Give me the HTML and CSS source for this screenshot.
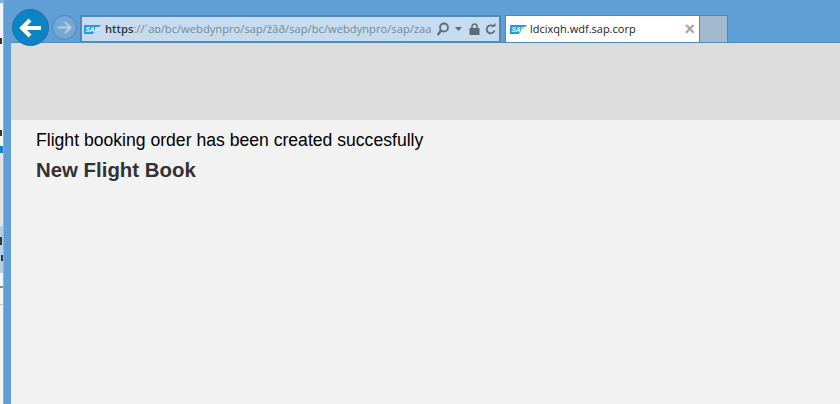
FILE: index.html
```html
<!DOCTYPE html>
<html lang="en">
<head>
<meta charset="utf-8">
<title>New Flight Book</title>
<link rel="stylesheet" href="styles.css">
</head>
<body>
<div class="desk">
  <div class="desk-sky"></div>
  <div class="desk-white"><i class="mark m1"></i><i class="mark m2"></i></div>
  <div class="desk-blue"></div>
  <div class="desk-grey"></div>
  <div class="desk-light"><i class="mark m3"></i><i class="mark m4"></i></div>
  <div class="desk-low"><i class="mark m5"></i><i class="rule"></i></div>
</div>
<div class="window">
  <header class="chrome">
    <button class="nav back" aria-label="Back">
      <svg width="24" height="20" viewBox="0 0 24 20"><path d="M11 2 3 10 11 18M4 10H22" fill="none" stroke="#fff" stroke-width="4"/></svg>
    </button>
    <button class="nav fwd" aria-label="Forward">
      <svg width="15" height="13" viewBox="0 0 15 13"><path d="M8 1 13.500 6.500 8 12M13 6.500H1" fill="none" stroke="#b9cfe0" stroke-width="2"/></svg>
    </button>
    <div class="address">
      <svg class="sap" width="17" height="9" viewBox="0 0 17 9"><path d="M0 0H17L8.500 9H0Z" fill="#2a9ae0"/><text x="1.500" y="7" class="sap-text">SAP</text></svg>
      <span class="url"><b>https</b>://ʾaɒ/bc/webdynpro/sap/žãð/sap/bc/webdynpro/sap/zaa</span>
      <svg class="tool mag" width="12" height="14" viewBox="0 0 12 14"><circle cx="7" cy="5.500" r="4" fill="none" stroke="#5e6a74" stroke-width="1.800"/><path d="M4 8.500 .7 13" stroke="#5e6a74" stroke-width="2.200"/></svg>
      <svg class="tool caret" width="7" height="4" viewBox="0 0 7 4"><path d="M0 0H7L3.500 4Z" fill="#5e6a74"/></svg>
      <svg class="tool lock" width="11" height="12" viewBox="0 0 11 12"><path d="M3 6V3.500a2.500 2.500 0 0 1 5 0V6" fill="none" stroke="#5e6a74" stroke-width="1.500"/><rect x="0.500" y="5" width="10" height="7" fill="#5e6a74"/></svg>
      <svg class="tool reload" width="11" height="12" viewBox="0 0 11 12"><path d="M8.500 3.500A4 4 0 1 0 9.500 7.500" fill="none" stroke="#5e6a74" stroke-width="1.800"/><path d="M6.500 3.500H10.500V0Z" fill="#5e6a74"/></svg>
    </div>
    <div class="tab">
      <svg class="sap" width="17" height="9" viewBox="0 0 17 9"><path d="M0 0H17L8.500 9H0Z" fill="#2a9ae0"/><text x="1.500" y="7" class="sap-text">SAP</text></svg>
      <span class="tab-title">ldcixqh.wdf.sap.corp</span>
      <span class="tab-close">×</span>
    </div>
    <div class="new-tab"></div>
  </header>
  <div class="band"></div>
  <main class="content">
    <p class="message">Flight booking order has been created succesfully</p>
    <h1 class="title">New Flight Book</h1>
  </main>
</div>
</body>
</html>
```
FILE: styles.css
```css
* { box-sizing: border-box; }
html, body { height: 100%; }
body {
  margin: 0;
  display: flex;
  height: 404px;
  overflow: hidden;
  background: #5f9fd6;
  font-family: "Liberation Sans", Arial, sans-serif;
}
.desk {
  width: 4px;
  flex: none;
  display: flex;
  flex-direction: column;
  border-right: 1px solid #a6adb3;
}
.desk-sky { height: 3px; background: #7fb2dc; }
.desk-white { height: 143px; background: #f4f5f6; padding-top: 35px; }
.desk-blue { height: 7px; background: #1a82c8; }
.desk-grey { height: 73px; background: #e4e4e4; }
.desk-light { height: 47px; background: #b5d0e4; padding-top: 11px; }
.desk-low { flex: 1; background: #f5f5f5; padding-top: 13px; }
.mark { display: block; width: 2px; background: #333; }
.m1 { height: 6px; }
.m2 { height: 6px; margin-top: 86px; }
.m3 { height: 8px; }
.m4 { height: 6px; margin-top: 10px; margin-left: 1px; }
.m5 { height: 2px; width: 3px; background: #888; }
.rule { display: block; height: 1px; margin-top: 16px; background: #c4c4c4; }
.window {
  flex: 1;
  min-width: 0;
  display: flex;
  flex-direction: column;
  background: #5f9fd6;
  padding-left: 7px;
}
.chrome {
  height: 43px;
  flex: none;
  display: flex;
  align-items: flex-end;
  position: relative;
  padding-left: 69px;
  border-bottom: 1px solid #4f8dc0;
}
.nav {
  position: absolute;
  padding: 0;
  border-radius: 50%;
  display: flex;
  align-items: center;
  justify-content: center;
}
.back {
  left: 1px;
  top: 9px;
  width: 37px;
  height: 37px;
  background: #0a84c4;
  border: 1px solid #2a6f9f;
  z-index: 1;
}
.fwd {
  left: 41px;
  top: 15px;
  width: 25px;
  height: 25px;
  background: #72a7d8;
  border: 1px solid #4f86b5;
}
.address {
  width: 421px;
  height: 27px;
  background: #c5dcf0;
  border: 2px solid #5188b8;
  border-bottom-width: 1px;
  display: flex;
  align-items: center;
  padding-left: 2px;
  color: #7d868e;
}
.sap { flex: none; }
.sap-text {
  font: italic 700 6.500px "Liberation Sans", sans-serif;
  fill: #fff;
}
.url {
  margin-left: 4px;
  font: 11.200px/14px "Open Sans", sans-serif;
  white-space: nowrap;
  width: 327px;
  overflow: hidden;
}
.url b { font-weight: 600; color: #333; }
.tool { flex: none; }
.mag { margin-left: 5px; }
.caret { margin-left: 6px; }
.lock { margin-left: 7px; }
.reload { margin-left: 5px; }
.tab {
  width: 195px;
  height: 27px;
  margin-left: 4px;
  background: #fff;
  border: 1px solid #5188b8;
  border-bottom: 0;
  display: flex;
  align-items: center;
  padding-left: 4px;
}
.tab-title {
  margin-left: 3px;
  font: 11px/14px "Open Sans", sans-serif;
  color: #222;
  flex: 1;
}
.tab-close {
  color: #a4a4a4;
  font: 700 18px/14px "Liberation Sans", sans-serif;
  margin-right: 4px;
}
.new-tab {
  width: 28px;
  height: 27px;
  background: #a2b9d0;
  border: 1px solid #4a88bb;
  border-left: 0;
  border-bottom: 0;
}
.band {
  height: 77px;
  flex: none;
  background: #dcdcdc;
}
.content {
  flex: 1;
  background: #f2f2f2;
  padding: 10px 25px;
}
.message {
  margin: 0;
  font-size: 17.600px;
  line-height: 20px;
  color: #000;
}
.title {
  margin: 9px 0 0;
  font-size: 20.400px;
  line-height: 23px;
  font-weight: 700;
  color: #333;
}
```
